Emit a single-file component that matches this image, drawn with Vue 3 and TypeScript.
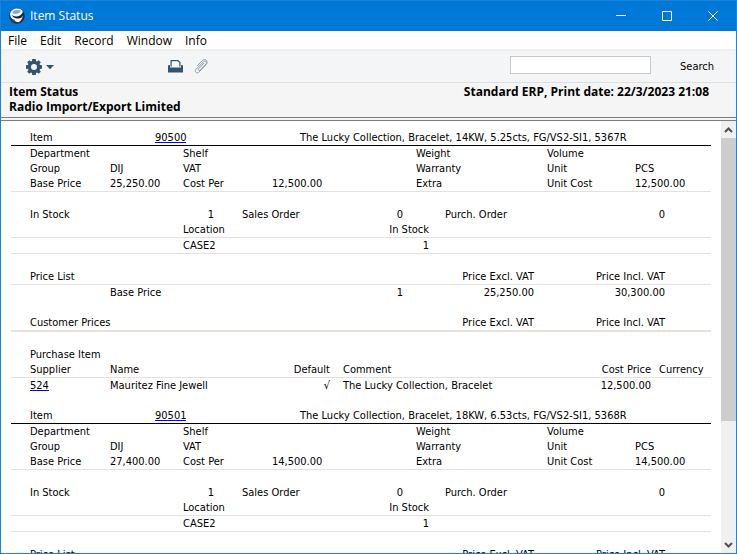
<script setup lang="ts">
import { ref } from 'vue'

interface StockItem {
  code: string
  description: string
  basePrice: string
  costPrice: string
  priceInclVat: string
  supplier: string
  supplierName: string
  comment: string
}

const menus: string[] = ['File', 'Edit', 'Record', 'Window', 'Info']

const items: StockItem[] = [
  {
    code: '90500',
    description: 'The Lucky Collection, Bracelet, 14KW, 5.25cts, FG/VS2-SI1, 5367R',
    basePrice: '25,250.00',
    costPrice: '12,500.00',
    priceInclVat: '30,300.00',
    supplier: '524',
    supplierName: 'Mauritez Fine Jewell',
    comment: 'The Lucky Collection, Bracelet',
  },
  {
    code: '90501',
    description: 'The Lucky Collection, Bracelet, 18KW, 6.53cts, FG/VS2-SI1, 5368R',
    basePrice: '27,400.00',
    costPrice: '14,500.00',
    priceInclVat: '32,880.00',
    supplier: '524',
    supplierName: 'Mauritez Fine Jewell',
    comment: 'The Lucky Collection, Bracelet',
  },
]

const search = ref('')
const report = ref<HTMLElement | null>(null)

function scrollReport(delta: number): void {
  report.value?.scrollBy({ top: delta })
}
</script>

<template>
  <div class="window">
    <header class="titlebar">
      <svg class="logo" viewBox="0 0 16 16" aria-hidden="true">
        <circle cx="8" cy="8" r="7.700" fill="#1d2f40" />
        <path d="M1 6C1.500 2.500 5 .6 8 .6c3 0 5 1.200 5.800 3.200C14.500 8 13 12.500 9.500 14.300 5 13.500 1 10.500 1 6z" fill="#f2f6f9" />
        <path d="M3.500 3.800C5 2 9.500 1.300 11.800 3 11 5 8.500 6 6.500 6 4.500 6 3.300 5.200 3.500 3.800z" fill="#93a7b6" />
        <path d="M.7 8.500C1 11.500 3 14.300 6 15.300c-1-1.300-1-2.300.2-3.300C3.500 11.700 1.800 10.300.7 8.500z" fill="#2b4256" />
        <path d="M2.500 6.800c2.500 2 6 2 8.500.6 1.300-.8 2.300-1.900 2.800-3.400.7 2 .3 3.800-.8 4.900-2.800 2.500-8.700 2-10.500-2.100z" fill="#14222f" />
      </svg>
      <span class="caption">Item Status</span>
      <button class="winbtn" type="button" aria-label="Minimize">
        <svg width="10" height="10" viewBox="0 0 10 10"><path d="M0 4.500h10" /></svg>
      </button>
      <button class="winbtn" type="button" aria-label="Maximize">
        <svg width="10" height="10" viewBox="0 0 10 10"><path d="M.5.500h9v9h-9z" /></svg>
      </button>
      <button class="winbtn" type="button" aria-label="Close">
        <svg width="10" height="10" viewBox="0 0 10 10"><path d="M.3.300l9.400 9.400M9.700.3L.3 9.700" /></svg>
      </button>
    </header>

    <nav class="menubar">
      <button v-for="menu in menus" :key="menu" type="button">{{ menu }}</button>
    </nav>

    <div class="toolbar">
      <button class="tool gear" type="button" aria-label="Operations">
        <svg width="28" height="16" viewBox="0 0 28 16">
          <g fill="#33536f">
            <path
              fill-rule="evenodd"
              d="M6.300 0h3.400l.4 2 .9.400L12.700 1.200l2.100 2.100L13.600 5l.4.900 2 .4v3.400l-2 .4-.4.900 1.200 1.700-2.100 2.100L11 13.600l-.9.400-.4 2H6.300l-.4-2-.9-.4-1.700 1.200-2.100-2.100L2.400 11 2 10.100 0 9.700V6.300l2-.4.400-.9L1.200 3.300l2.100-2.100L5 2.400 5.900 2zM8 5a3 3 0 1 0 0 6 3 3 0 0 0 0-6z"
            />
            <path d="M20 6h8l-4 4.200z" />
          </g>
        </svg>
      </button>
      <button class="tool" type="button" aria-label="Print">
        <svg width="15" height="13" viewBox="0 0 15 13">
          <path d="M3.100 6.500V.6h6.900l1.900 2v3.900" fill="#f9fafb" stroke="#33536f" stroke-width="1.200" />
          <path d="M0 6.200A1.200 1.200 0 0 1 1.200 5H2v2.500h11V5h.8A1.200 1.200 0 0 1 15 6.200v6.300H0z" fill="#33536f" />
        </svg>
      </button>
      <button class="tool" type="button" aria-label="Attachments">
        <svg width="14" height="15" viewBox="0 0 14 15">
          <path
            d="M9.800 4.300L4.700 9.800c-.4.500-.4 1.100 0 1.500.4.400 1 .3 1.500-.1l5.600-6c.9-1 .9-2 .2-2.600-.7-.7-1.800-.6-2.600.2L2.300 10c-1.200 1.200-1.300 2.500-.5 3.300.9.900 2.300.7 3.400-.4l6.900-7.300c1.300-1.400 1.300-3.300.2-4.300C11.200.200 9.500.400 8.200 1.700L3.500 6.600"
            fill="none" stroke="#8c9cab" stroke-width="1" stroke-linecap="round"
          />
        </svg>
      </button>
      <input id="report-search" v-model="search" class="search" type="text" />
      <label for="report-search">Search</label>
    </div>

    <div class="heading">
      <h1>Item Status<br />Radio Import/Export Limited</h1>
      <p>Standard ERP, Print date: 22/3/2023 21:08</p>
    </div>

    <div class="body">
      <main ref="report" class="report">
        <section v-for="item in items" :key="item.code" class="item">
          <table class="title">
            <colgroup><col class="w144" /><col class="w145" /><col /></colgroup>
            <tbody>
              <tr><th>Item</th><td><a href="#">{{ item.code }}</a></td><td>{{ item.description }}</td></tr>
            </tbody>
          </table>

          <table class="ruled">
            <colgroup>
              <col class="w99" /><col class="w73" /><col class="w89" /><col class="w144" />
              <col class="w131" /><col class="w88" /><col />
            </colgroup>
            <tbody>
              <tr><th>Department</th><td></td><th>Shelf</th><td></td><th>Weight</th><th>Volume</th><td></td></tr>
              <tr><th>Group</th><td>DIJ</td><th>VAT</th><td></td><th>Warranty</th><th>Unit</th><td>PCS</td></tr>
              <tr>
                <th>Base Price</th><td>{{ item.basePrice }}</td><th>Cost Per</th><td>{{ item.costPrice }}</td>
                <th>Extra</th><th>Unit Cost</th><td>{{ item.costPrice }}</td>
              </tr>
            </tbody>
          </table>

          <table class="spaced">
            <colgroup>
              <col class="w172" /><col class="w31" /><col class="w131" /><col class="w58" />
              <col class="w131" /><col class="w131" /><col />
            </colgroup>
            <tbody>
              <tr>
                <th>In Stock</th><td class="num">1</td><th class="inset">Sales Order</th><td class="num">0</td>
                <th class="order">Purch. Order</th><td class="num">0</td><td></td>
              </tr>
            </tbody>
          </table>
          <table>
            <colgroup><col class="w172" /><col class="w131" /><col class="w115" /><col /></colgroup>
            <thead class="rule"><tr><th></th><th>Location</th><th class="num">In Stock</th><th></th></tr></thead>
            <tbody class="rule"><tr><td></td><td>CASE2</td><td class="num">1</td><td></td></tr></tbody>
          </table>

          <table class="spaced">
            <colgroup><col class="w99" /><col class="w144" /><col class="w149" /><col class="w131" /><col class="w131" /><col /></colgroup>
            <thead class="rule">
              <tr><th>Price List</th><th></th><th></th><th class="num">Price Excl. VAT</th><th class="num">Price Incl. VAT</th><th></th></tr>
            </thead>
            <tbody>
              <tr>
                <td></td><td>Base Price</td><td class="num">1</td><td class="num">{{ item.basePrice }}</td>
                <td class="num">{{ item.priceInclVat }}</td><td></td>
              </tr>
            </tbody>
          </table>

          <table class="spaced">
            <colgroup><col class="w392" /><col class="w131" /><col class="w131" /><col /></colgroup>
            <thead class="thick">
              <tr><th>Customer Prices</th><th class="num">Price Excl. VAT</th><th class="num">Price Incl. VAT</th><th></th></tr>
            </thead>
          </table>

          <table class="spaced">
            <caption>Purchase Item</caption>
            <colgroup>
              <col class="w99" /><col class="w131" /><col class="w89" /><col class="w172" /><col class="w149" /><col />
            </colgroup>
            <thead class="rule">
              <tr>
                <th>Supplier</th><th>Name</th><th class="num">Default</th><th class="comment">Comment</th>
                <th class="num">Cost Price</th><th class="currency">Currency</th>
              </tr>
            </thead>
            <tbody>
              <tr>
                <td><a href="#">{{ item.supplier }}</a></td><td>{{ item.supplierName }}</td><td class="num">√</td>
                <td class="comment">{{ item.comment }}</td><td class="num">{{ item.costPrice }}</td><td></td>
              </tr>
            </tbody>
          </table>
        </section>
      </main>

      <div class="scrollbar">
        <button type="button" aria-label="Scroll up" @click="scrollReport(-15)">
          <svg width="9" height="6" viewBox="0 0 9 6"><path d="M1 5l3.500-3.500L8 5" /></svg>
        </button>
        <div class="track"><div class="thumb"></div></div>
        <button type="button" aria-label="Scroll down" @click="scrollReport(15)">
          <svg width="9" height="6" viewBox="0 0 9 6"><path d="M1 1l3.500 3.500L8 1" /></svg>
        </button>
      </div>
    </div>
  </div>
</template>

<style>
html,
body {
  margin: 0;
  overflow: hidden;
}
</style>

<style scoped>
.window {
  box-sizing: border-box;
  display: flex;
  flex-direction: column;
  height: 100vh;
  border: 1px solid #1883d7;
  background: #fff;
  color: #000;
  font: 11px/15px 'DejaVu Sans Condensed', 'DejaVu Sans', sans-serif;
}

button {
  padding: 0;
  border: 0;
  background: none;
  color: inherit;
  font: inherit;
}

.titlebar {
  display: flex;
  flex: none;
  align-items: center;
  height: 30px;
  padding-left: 8px;
  background: #0078d7;
  color: #fff;
  font: 12px/16px 'Open Sans', 'Noto Sans', sans-serif;
}

.logo {
  width: 16px;
  height: 16px;
}

.caption {
  flex: 1;
  padding-left: 5px;
}

.winbtn {
  display: flex;
  align-items: center;
  justify-content: center;
  width: 46px;
  height: 28px;
}

.winbtn svg {
  fill: none;
  stroke: #fff;
  stroke-width: 1;
}

.menubar {
  display: flex;
  flex: none;
  gap: 13px;
  height: 18px;
  padding-left: 7px;
  font: 12px/20px 'Open Sans', 'Noto Sans', sans-serif;
}

.toolbar {
  display: flex;
  flex: none;
  align-items: center;
  height: 31px;
  padding: 0 22px 0 25px;
  border-top: 2px solid #f0f0f0;
  border-bottom: 1px solid #dedfe3;
  background: #f4f5f7;
}

.tool {
  display: flex;
  margin-right: 11px;
}

.gear {
  margin-right: 114px;
}

.search {
  box-sizing: border-box;
  width: 141px;
  height: 18px;
  margin: 0 29px 4px auto;
  padding: 0 4px;
  border: 1px solid #c8c8c8;
  background: #fff;
  font: inherit;
}

.heading {
  display: flex;
  flex: none;
  justify-content: space-between;
  padding: 1px 27px 3px 8px;
  border-bottom: 4px double #807a7a;
  background: #f5f5f5;
  font: bold 12px/15px 'Open Sans', 'Noto Sans', sans-serif;
}

.heading h1,
.heading p {
  margin: 0;
  font: inherit;
}

.body {
  display: flex;
  flex: 1;
  min-height: 0;
}

.report {
  flex: 1;
  overflow: hidden;
  padding: 9px 10px 0;
}

.item {
  margin-bottom: 15px;
}

table {
  width: 100%;
  border-collapse: separate;
  border-spacing: 0;
  table-layout: fixed;
}

th,
td {
  height: 15px;
  padding: 0;
  font-weight: normal;
  line-height: 15px;
  text-align: left;
  white-space: nowrap;
}

th:first-child,
td:first-child,
caption {
  padding-left: 19px;
}

caption {
  text-align: left;
}

a {
  display: inline-block;
  height: 12px;
  border-bottom: 1px solid #0000ff;
  color: #000;
  line-height: 15px;
  text-decoration: none;
  vertical-align: top;
}

.title {
  border-bottom: 1px solid #000;
}

.ruled {
  border-bottom: 1px solid #e6e1de;
}

.rule th,
.rule td {
  border-bottom: 1px solid #e6e1de;
}

.thick th {
  border-bottom: 2px solid #ece0db;
}

.spaced {
  margin-top: 15px;
}

th.num,
td.num {
  text-align: right;
}

th.inset {
  padding-left: 28px;
}

th.order {
  padding-left: 42px;
}

.comment {
  padding-left: 13px;
}

.currency {
  padding-left: 8px;
}

.w31 { width: 31px; }
.w58 { width: 58px; }
.w73 { width: 73px; }
.w88 { width: 88px; }
.w89 { width: 89px; }
.w99 { width: 99px; }
.w115 { width: 115px; }
.w131 { width: 131px; }
.w144 { width: 144px; }
.w145 { width: 145px; }
.w149 { width: 149px; }
.w172 { width: 172px; }
.w392 { width: 392px; }

.scrollbar {
  display: flex;
  flex-direction: column;
  width: 15px;
  background: #f0f0f0;
}

.scrollbar button {
  display: flex;
  align-items: center;
  justify-content: center;
  height: 17px;
}

.scrollbar svg {
  fill: none;
  stroke: #505050;
  stroke-width: 2;
}

.track {
  flex: 1;
}

.thumb {
  height: 71%;
  background: #cdcdcd;
}
</style>
